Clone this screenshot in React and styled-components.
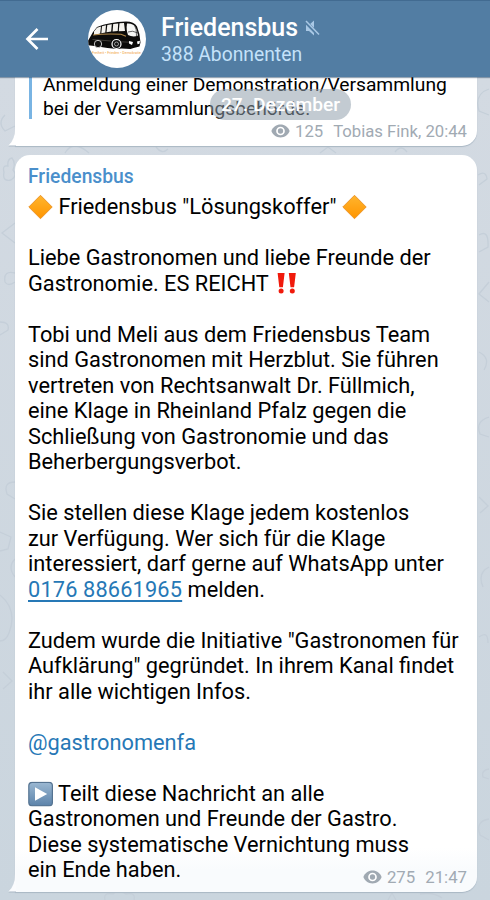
import React from 'react';
import styled, { createGlobalStyle } from 'styled-components';

const post = [
    [{ emoji: 'diamond' }, ' Friedensbus "Lösungskoffer" ', { emoji: 'diamond' }],
    [],
    ['Liebe Gastronomen und liebe Freunde der'],
    ['Gastronomie. ES REICHT ', { emoji: 'bangs' }],
    [],
    ['Tobi und Meli aus dem Friedensbus Team'],
    ['sind Gastronomen mit Herzblut. Sie führen'],
    ['vertreten von Rechtsanwalt Dr. Füllmich,'],
    ['eine Klage in Rheinland Pfalz gegen die'],
    ['Schließung von Gastronomie und das'],
    ['Beherbergungsverbot.'],
    [],
    ['Sie stellen diese Klage jedem kostenlos'],
    ['zur Verfügung. Wer sich für die Klage'],
    ['interessiert, darf gerne auf WhatsApp unter'],
    [{ phone: '0176 88661965' }, ' melden.'],
    [],
    ['Zudem wurde die Initiative "Gastronomen für'],
    ['Aufklärung" gegründet. In ihrem Kanal findet'],
    ['ihr alle wichtigen Infos.'],
    [],
    [{ mention: '@gastronomenfa' }],
    [],
    [{ emoji: 'play' }, ' Teilt diese Nachricht an alle'],
    ['Gastronomen und Freunde der Gastro.'],
    ['Diese systematische Vernichtung muss'],
    ['ein Ende haben.'],
];

function Emoji({ name }) {
    if (name === 'diamond') {
        return (
            <EmojiSvg viewBox='0 0 25 25'>
                <defs>
                    <linearGradient id='orange' x1='0' y1='0' x2='0' y2='1'>
                        <stop offset='0' stopColor='#ffb52e' />
                        <stop offset='1' stopColor='#ff9500' />
                    </linearGradient>
                </defs>
                <path d='M12.5 .8 24.2 12.5 12.5 24.2 .8 12.5Z' fill='url(#orange)' stroke='#ec952b' strokeWidth='1' strokeLinejoin='round' />
            </EmojiSvg>
        );
    }
    if (name === 'bangs') {
        return (
            <EmojiSvg viewBox='0 0 25 25' fill='#f01a0c'>
                <path d='M3.6 1.4h7L8.9 15.8H5.300ZM14.800 1.400h7L20.100 15.800h-3.600Z' />
                <circle cx='7.1' cy='19.600' r='2.500' />
                <circle cx='18.300' cy='19.600' r='2.500' />
            </EmojiSvg>
        );
    }
    return (
        <EmojiSvg viewBox='0 0 25 25'>
            <defs>
                <linearGradient id='steel' x1='0' y1='0' x2='0' y2='1'>
                    <stop offset='0' stopColor='#9bb8d2' />
                    <stop offset='1' stopColor='#5c83aa' />
                </linearGradient>
            </defs>
            <rect x='.8' y='.8' width='23.6' height='23.6' rx='3.4' fill='url(#steel)' stroke='#557391' strokeWidth='1.2' />
            <path d='M7 5.8v13.4l12.2-6.7Z' fill='#fff' />
        </EmojiSvg>
    );
}

function Part({ part }) {
    if (typeof part === 'string') return part;
    if (part.emoji) return <Emoji name={part.emoji} />;
    if (part.phone) return <PhoneLink href='tel:017688661965'>{part.phone}</PhoneLink>;
    return <Mention>{part.mention}</Mention>;
}

function BusLogo() {
    return (
        <svg width='58' height='58' viewBox='0 0 58 58'>
            <path d='M5 22 9 17Q21 12 38 11.500q8 0 11 5 3 7 3.500 16l-1 4-6 1.500-3 1-9-.5-4 .5-10-1-13-2-9-1Z' fill='#0c0b0a' />
            <path d='M6 21.500 9 17.700l4-1.200-.8 7-6.200 1.500ZM14 16.200l4-1-.7 7.300-4 .8ZM19.300 15l4.500-.8-.6 7.300-4.700.8ZM25.200 14l5-.6-.5 7.600-5.100.6ZM31.500 13.200l4.500-.3 1 8-6.200.4Z' fill='#f5f3ee' />
            <path d='M39 13.500q6-.5 8.500 3.500 2 4 2.500 8.500-5 2-10-.5-2-5-1-11.500Z' fill='#f8f8f6' />
            <path d='M46 14q3 5 2.500 12M40 22q4-2 10 1' stroke='#222' strokeWidth='.7' fill='none' />
            <path d='M5 25q11-1.500 28-.8l5 2' stroke='#b48a4a' strokeWidth='1.100' fill='none' />
            <path d='M4.500 29.500 23 31m10 .8 8 .4' stroke='#55504b' strokeWidth='.7' />
            <circle cx='10' cy='34' r='3.700' fill='#111' stroke='#eee' strokeWidth='.8' />
            <circle cx='28.500' cy='34' r='4.500' fill='#111' stroke='#fff' strokeWidth='1.200' />
            <circle cx='28.500' cy='34' r='2' fill='none' stroke='#bbb' strokeWidth='.8' />
            <path d='m41 31 4 1-1 3-3-1.500Zm8 .5 3-.8-.5 3-2 .5Z' fill='#fff' />
            <LogoText x='4' y='43.500' textLength='49' lengthAdjust='spacingAndGlyphs'>
                Freiheit • Frieden • Demokratie
            </LogoText>
        </svg>
    );
}

function Eye() {
    return (
        <svg width='19' height='14' viewBox='0 0 19 14'>
            <path d='M9.500 .6C5.300.6 1.900 3.100.4 7c1.500 3.900 4.900 6.400 9.100 6.400s7.600-2.500 9.100-6.400C17.100 3.100 13.700.6 9.500.6Z' fill='#a0a9b2' />
            <circle cx='9.500' cy='7' r='3.500' fill='none' stroke='#fff' strokeWidth='1.700' />
        </svg>
    );
}

function Doodles() {
    return (
        <Wallpaper width='490' height='823' fill='none'>
            {/* left margin */}
            <path d='M5 38q-8 8 0 16l10-5M4 95q-2-7 4-6-1-7 4-8 4 5 1 12 5 6-2 10-9 2-7-8ZM15 146 2 156l13 10M15 196q-12-3-10 9 3 5 10 0M0 245q10 0 8 8l-8 5M15 405q-12 0-8 12l8 5M0 455l11 5-3 12-8 2M15 482q-8 8 0 18M0 518q18 15 9 38-3 8-9 8M3 595l9 9-9 8' />
            {/* right margin */}
            <path d='M489 12q-15 5-10 22l10 4M478 98q8-5 9 4l-8 6M479 158q10-6 9 12l-9 5M489 205l-10 12 10 8M479 275q12 6 5 18M489 340q-14 4-9 17l9 3M479 420l9 9-8 7M489 490q-12 6-6 20M479 560q9-7 9 6M489 692q-8 1-6 8l6 2M489 742q-14 2-9 16l9 5' />
            {/* gaps between bubbles */}
            <path d='M65 76q8-14 24 0M156 70q6 8 12 2M320 76l8-6 8 6M395 75q6-8 12 0M105 823q-2-8 8-6l5-4 8 4q10-2 8 6M388 823l4-7 4 7M420 817q14-2 22 4' />
        </Wallpaper>
    );
}

function Tail() {
    return (
        <TailSvg width='8' height='26' viewBox='0 0 8 26'>
            <path d='M7 0v8Q7 20 .5 25.500H8V0Z' fill='currentColor' />
        </TailSvg>
    );
}

export default function App() {
    return (
        <>
            <GlobalStyle />
            <Screen>
                <Header>
                    <BackButton aria-label='Zurück'>
                        <svg width='24' height='24' viewBox='0 0 24 24' fill='none' stroke='#fff' strokeWidth='2.700'>
                            <path d='M23 12H3M12.500 2 2.500 12l10 10' />
                        </svg>
                    </BackButton>
                    <Avatar>
                        <BusLogo />
                    </Avatar>
                    <Heading>
                        <Title>
                            <span>Friedensbus</span>
                            <svg width='15' height='16' viewBox='0 0 15 16'>
                                <path d='M1 5h3l5-4.500v15L4 11H1Z' fill='#a9c8e5' />
                                <path d='M0 1.200 13.500 15' stroke='#527da3' strokeWidth='3.600' />
                                <path d='M1 1 14 14.500' stroke='#a9c8e5' strokeWidth='1.500' />
                            </svg>
                        </Title>
                        <Subtitle>388 Abonnenten</Subtitle>
                    </Heading>
                </Header>
                <Chat>
                    <Doodles />
                    <Bubble $previous>
                        <Tail />
                        <Quote>
                            <Line $small>Anmeldung einer Demonstration/Versammlung</Line>
                            <Line $small>bei der Versammlungsbehörde.</Line>
                        </Quote>
                        <Meta $size='16.7px'>
                            <Eye />
                            <span>125</span>
                            <Stamp>Tobias Fink, 20:44</Stamp>
                        </Meta>
                    </Bubble>
                    <DatePill>27. Dezember</DatePill>
                    <Bubble>
                        <Tail />
                        <Author>Friedensbus</Author>
                        {post.map((line, index) => (
                            <Line key={index}>
                                {line.map((part, i) => (
                                    <Part key={i} part={part} />
                                ))}
                            </Line>
                        ))}
                        <Meta $overlap>
                            <Eye />
                            <span>275</span>
                            <Stamp>21:47</Stamp>
                        </Meta>
                    </Bubble>
                </Chat>
            </Screen>
        </>
    );
}

const GlobalStyle = createGlobalStyle`
    * {
        box-sizing: border-box;
    }
    body {
        margin: 0;
        font-family: Roboto, 'Liberation Sans', sans-serif;
    }
`;

const Screen = styled.div`
    width: 490px;
    height: 900px;
    display: flex;
    flex-direction: column;
    overflow: hidden;
`;

const Header = styled.header`
    height: 77px;
    flex: none;
    display: flex;
    align-items: center;
    padding-left: 25px;
    background: #527da3;
    border-top: 1px solid #426b91;
    box-shadow: 0 1px 1px rgba(50, 80, 110, 0.5);
    z-index: 1;
`;

const BackButton = styled.button`
    display: flex;
    padding: 0;
    border: 0;
    background: none;
`;

const Avatar = styled.div`
    width: 58px;
    height: 58px;
    margin-left: 38.5px;
    border-radius: 50%;
    overflow: hidden;
    background: #fff;
`;

const LogoText = styled.text`
    font-size: 3.6px;
    fill: #f1a544;
`;

const Heading = styled.div`
    margin-left: 15.5px;
    padding-top: 4px;
`;

const Title = styled.div`
    display: flex;
    align-items: center;
    gap: 7px;
    color: #fff;
    font-size: 25px;
    font-weight: 500;
    line-height: 28px;
`;

const Subtitle = styled.div`
    color: #c4e2fa;
    font-size: 19.3px;
    line-height: 26px;
`;

const Chat = styled.main`
    flex: 1;
    position: relative;
    display: flex;
    flex-direction: column;
    gap: 9px;
    background: linear-gradient(#d3dae2, #cad5de);
`;

const Wallpaper = styled.svg`
    position: absolute;
    inset: 0;
    stroke: #c5cfd9;
    stroke-width: 1.3;
`;

const Bubble = styled.section`
    position: relative;
    width: 462px;
    height: ${(props) => (props.$previous ? '69px' : '737px')};
    margin-left: 15px;
    padding: ${(props) => (props.$previous ? '0 10px 0 14px' : '8px 10px 0 13px')};
    border-radius: ${(props) => (props.$previous ? '0 0 15px 0' : '15px 15px 15px 0')};
    background: ${(props) => (props.$previous ? '#fff' : 'linear-gradient(#fff 94%, #f9fbfd 97%)')};
    color: ${(props) => (props.$previous ? '#fff' : '#fbfcfe')};
    box-shadow: 0 1px 1px #a9b7c4;
`;

const TailSvg = styled.svg`
    position: absolute;
    left: -7px;
    bottom: 0;
    filter: drop-shadow(0 1px 0.5px #a9b7c4);
`;

const Quote = styled.blockquote`
    position: relative;
    height: 42px;
    margin: 0;
    padding-left: 11px;
    border-left: 3px solid #79b4e3;
    display: flex;
    flex-direction: column;
    justify-content: flex-end;

    & > div:last-child {
        margin-bottom: -2px;
    }
`;

const Author = styled.div`
    position: relative;
    height: 31px;
    color: #4a8fcb;
    font-size: 19.3px;
    font-weight: 500;
    line-height: 27px;
`;

const Line = styled.div`
    position: relative;
    flex: none;
    height: ${(props) => (props.$small ? '24px' : '25.5px')};
    color: #000;
    font-size: ${(props) => (props.$small ? '19.25px' : '21.77px')};
    line-height: ${(props) => (props.$small ? '24px' : '25.5px')};
    white-space: pre;
`;

const EmojiSvg = styled.svg`
    width: 25px;
    height: 25px;
    vertical-align: -5px;
    margin: -3px 0;
    transform: translateY(-2.5px);
`;

const PhoneLink = styled.a`
    color: #2678b6;
    letter-spacing: 0.15px;
    text-decoration: underline;
    text-decoration-thickness: 1.5px;
    text-underline-offset: 2.5px;
`;

const Mention = styled.span`
    color: #2678b6;
`;

const Meta = styled.div`
    position: relative;
    display: flex;
    align-items: center;
    justify-content: flex-end;
    gap: 5px;
    height: 22px;
    margin-top: ${(props) => (props.$overlap ? '-16.5px' : '1px')};
    color: #a1aab3;
    font-size: ${(props) => props.$size || '16.8px'};
`;

const Stamp = styled.span`
    margin-left: 5px;
`;

const DatePill = styled.div`
    position: absolute;
    top: 12px;
    left: 210px;
    z-index: 1;
    width: 141px;
    height: 31px;
    border-radius: 16px;
    background: rgba(145, 160, 173, 0.55);
    color: #fff;
    font-size: 19.2px;
    font-weight: 500;
    line-height: 31px;
    text-align: center;
`;
